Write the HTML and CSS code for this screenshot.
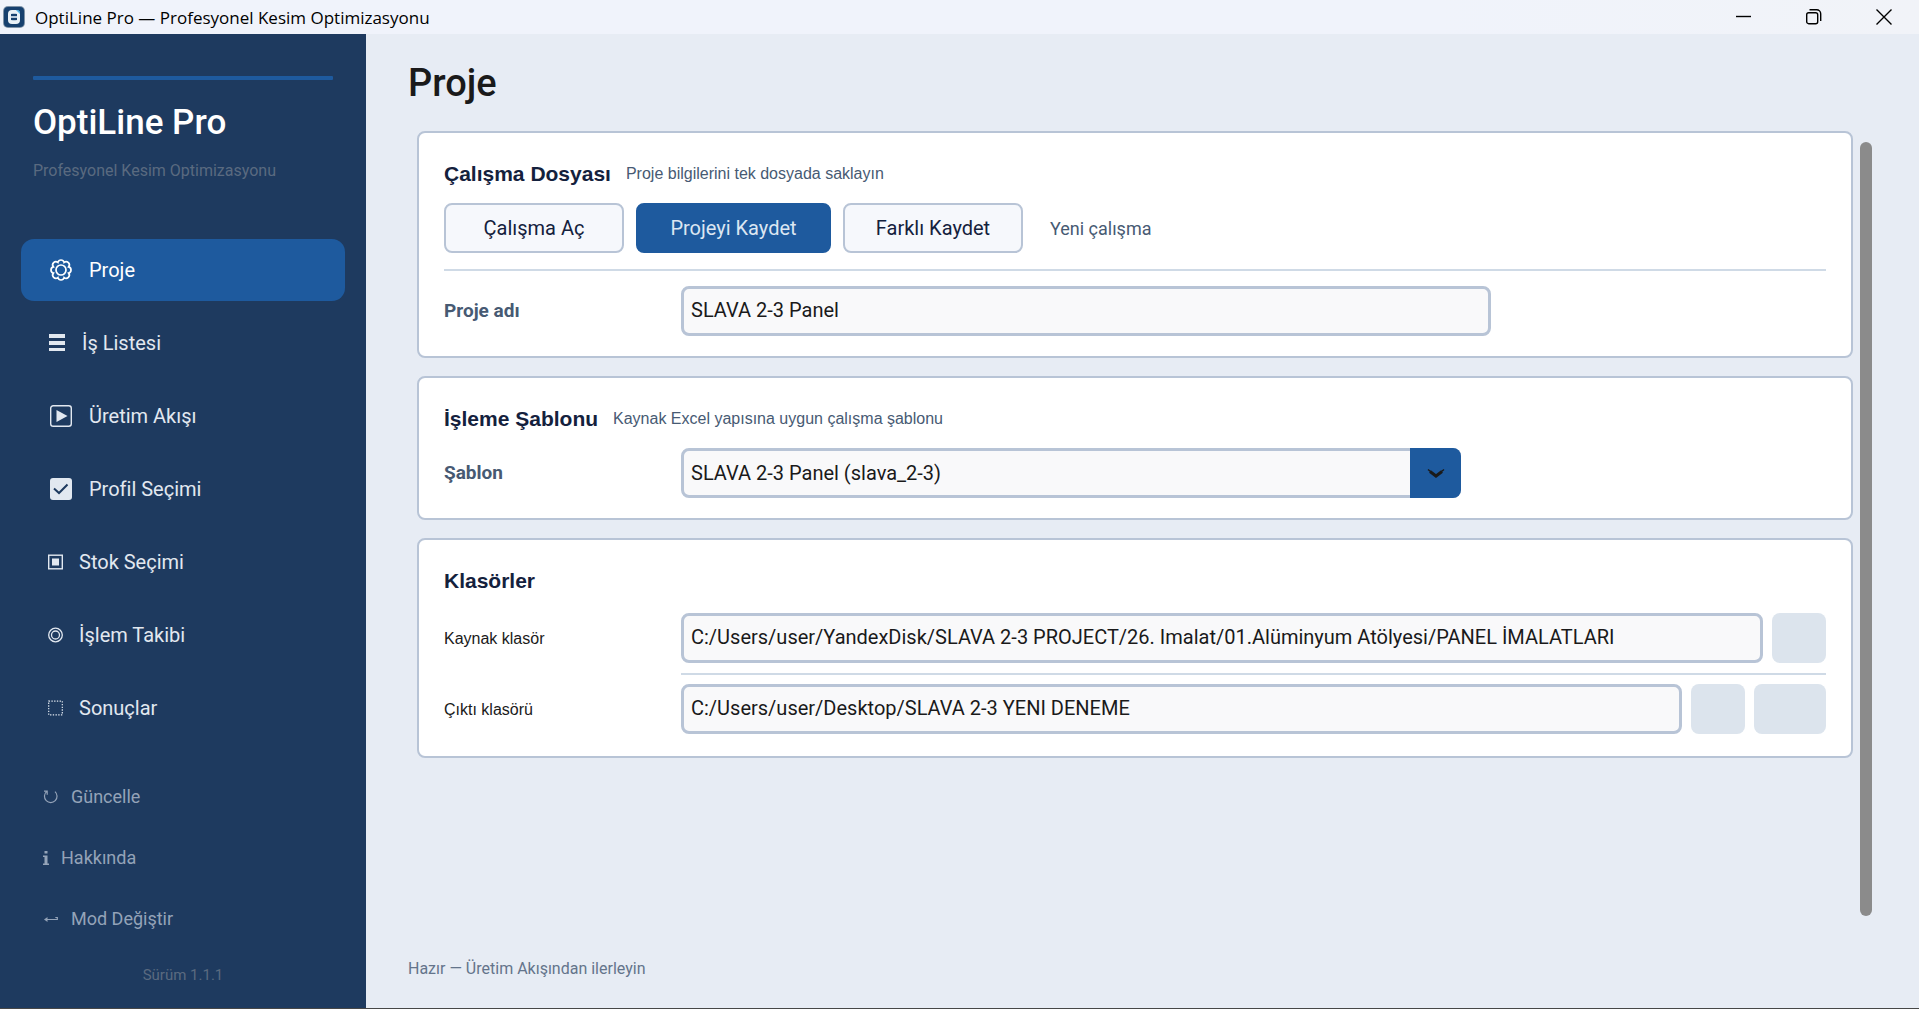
FILE: index.html
```html
<!DOCTYPE html>
<html lang="tr">
<head>
	<meta charset="utf-8">
	<title>OptiLine Pro — Profesyonel Kesim Optimizasyonu</title>
	<link rel="stylesheet" href="styles.css">
</head>
<body>
<header class="titlebar">
	<svg class="app-icon" width="22" height="22" viewBox="0 0 22 22">
		<rect width="22" height="22" rx="5" fill="#7f93a8"/>
		<rect x="1" y="1" width="20" height="20" rx="4" fill="#16406f"/>
		<rect x="5" y="4" width="12" height="14" rx="4" fill="#e9f1f8"/>
		<path d="M13 4h1a3 3 0 0 1 3 3v1z" fill="#4fb0e6"/>
		<rect x="8" y="7" width="6" height="8" rx="2" fill="#b9cadb"/>
		<path d="M8 9h6M8 13h6" stroke="#16406f" stroke-width="2"/>
	</svg>
	<span class="window-title">OptiLine Pro — Profesyonel Kesim Optimizasyonu</span>
	<div class="window-buttons">
		<button type="button" aria-label="Simge durumuna küçült"><svg width="16" height="16" viewBox="0 0 16 16"><path d="M0 7.5h15"/></svg></button>
		<button type="button" aria-label="Önceki boyut"><svg width="16" height="16" viewBox="0 0 16 16"><rect x="0.7" y="3.7" width="11" height="11" rx="2"/><path d="M3.5 0.7h7.2a4 4 0 0 1 4 4v7.3"/></svg></button>
		<button type="button" aria-label="Kapat"><svg width="16" height="16" viewBox="0 0 16 16"><path d="M0.5 0.5l15 15M15.5 0.5l-15 15"/></svg></button>
	</div>
</header>
<div class="layout">
	<aside class="sidebar">
		<div class="accent"></div>
		<div class="brand">OptiLine Pro</div>
		<div class="tagline">Profesyonel Kesim Optimizasyonu</div>
		<nav class="menu">
			<button type="button" class="on">
				<svg class="icon wide" viewBox="0 0 25 24">
					<path d="M9.9 4.4A3.2 3.2 0 0 1 16.1 4.4A3.2 3.2 0 0 1 20.6 8.9A3.2 3.2 0 0 1 20.6 15.1A3.2 3.2 0 0 1 16.1 19.6A3.2 3.2 0 0 1 9.9 19.6A3.2 3.2 0 0 1 5.4 15.1A3.2 3.2 0 0 1 5.4 8.9A3.2 3.2 0 0 1 9.9 4.4z" fill="none" stroke="currentColor" stroke-width="1.7"/>
					<circle cx="13" cy="12" r="5" fill="none" stroke="currentColor" stroke-width="1.7"/>
				</svg>
				<span>Proje</span>
			</button>
			<button type="button">
				<svg class="icon mid" viewBox="0 0 18 24"><path d="M1 3h16v4H1zM1 10h16v4H1zM1 17h16v3H1z" fill="currentColor"/></svg>
				<span>İş Listesi</span>
			</button>
			<button type="button">
				<svg class="icon wide" viewBox="0 0 25 24">
					<rect x="2.7" y="1.7" width="20.6" height="20.6" rx="2.5" fill="none" stroke="currentColor" stroke-width="1.4"/>
					<path d="M8.5 6l11 6-11 6z" fill="currentColor"/>
				</svg>
				<span>Üretim Akışı</span>
			</button>
			<button type="button">
				<svg class="icon wide" viewBox="0 0 25 24">
					<rect x="2" y="1" width="22" height="22" rx="3" fill="currentColor"/>
					<path d="M6 11.5l5 4.5 8.5-8.5" fill="none" stroke="#1e3a5f" stroke-width="2"/>
				</svg>
				<span>Profil Seçimi</span>
			</button>
			<button type="button">
				<svg class="icon small" viewBox="0 0 15 24"><rect x="0.7" y="5.2" width="13.6" height="13.6" fill="none" stroke="currentColor" stroke-width="1.4"/><rect x="4" y="8.5" width="7" height="7" fill="currentColor"/></svg>
				<span>Stok Seçimi</span>
			</button>
			<button type="button">
				<svg class="icon small" viewBox="0 0 15 24"><g fill="none" stroke="currentColor" stroke-width="1.3"><circle cx="7.5" cy="12" r="6.8"/><circle cx="7.5" cy="12" r="4"/></g></svg>
				<span>İşlem Takibi</span>
			</button>
			<button type="button">
				<svg class="icon small" viewBox="0 0 15 24"><rect x="0.7" y="5.2" width="13.6" height="13.6" fill="none" stroke="currentColor" stroke-width="1.2" stroke-dasharray="1.36 1.36"/></svg>
				<span>Sonuçlar</span>
			</button>
		</nav>
		<div class="extras">
			<button type="button">
				<svg class="icon loop" viewBox="0 0 16 16"><path d="M3.5 2.6a6.3 6.3 0 1 0 8.5 0M1 2.2h3.2v3.6" fill="none" stroke="currentColor" stroke-width="1.2"/></svg>
				<span>Güncelle</span>
			</button>
			<button type="button">
				<svg class="icon info" viewBox="0 0 6 16"><path d="M1.5 1h3v2.5h-3zM0 5.5h4.5v8H6V15H0v-1.5h1.5V7H0z" fill="currentColor"/></svg>
				<span>Hakkında</span>
			</button>
			<button type="button">
				<svg class="icon loop" viewBox="0 0 16 16"><path d="M2 8.5h12.3V6.5h-2" fill="none" stroke="currentColor" stroke-width="1.2"/><path d="M1 8.5l3.5-2.5v5z" fill="currentColor"/></svg>
				<span>Mod Değiştir</span>
			</button>
		</div>
		<div class="version">Sürüm 1.1.1</div>
	</aside>
	<main class="main">
		<h1>Proje</h1>
		<div class="scroll">
			<div class="cards">
				<section class="card">
					<div class="head"><h2>Çalışma Dosyası</h2><p>Proje bilgilerini tek dosyada saklayın</p></div>
					<div class="actions">
						<button type="button" class="btn">Çalışma Aç</button>
						<button type="button" class="btn primary">Projeyi Kaydet</button>
						<button type="button" class="btn">Farklı Kaydet</button>
						<span class="state">Yeni çalışma</span>
					</div>
					<hr>
					<div class="row">
						<label for="name">Proje adı</label>
						<input type="text" id="name" class="name" value="SLAVA 2-3 Panel">
					</div>
				</section>
				<section class="card">
					<div class="head"><h2>İşleme Şablonu</h2><p>Kaynak Excel yapısına uygun çalışma şablonu</p></div>
					<div class="row">
						<label for="template">Şablon</label>
						<div class="combo">
							<select id="template"><option>SLAVA 2-3 Panel (slava_2-3)</option></select>
							<span class="arrow"><svg width="18" height="10" viewBox="0 0 18 10"><path d="M1 1.5L3.5 3.5M17 1.5L14.5 3.5" stroke="#1a1a1a" stroke-width="1.5"/><path d="M3 3.5L9 8l6-4.5" fill="none" stroke="#1a1a1a" stroke-width="3"/></svg></span>
						</div>
					</div>
				</section>
				<section class="card">
					<div class="head"><h2>Klasörler</h2></div>
					<div class="folders">
						<div class="row">
							<label for="source" class="plain">Kaynak klasör</label>
							<input type="text" id="source" value="C:/Users/user/YandexDisk/SLAVA 2-3 PROJECT/26. Imalat/01.Alüminyum Atölyesi/PANEL İMALATLARI">
							<button type="button" class="pick" aria-label="Kaynak klasör seç"></button>
						</div>
						<hr>
						<div class="row">
							<label for="output" class="plain">Çıktı klasörü</label>
							<input type="text" id="output" value="C:/Users/user/Desktop/SLAVA 2-3 YENI DENEME">
							<button type="button" class="pick" aria-label="Çıktı klasörü seç"></button>
							<button type="button" class="pick open" aria-label="Çıktı klasörünü aç"></button>
						</div>
					</div>
				</section>
			</div>
			<div class="thumb"></div>
		</div>
		<div class="status">Hazır — Üretim Akışından ilerleyin</div>
	</main>
</div>
</body>
</html>
```
FILE: styles.css
```css
*{margin: 0;padding: 0;box-sizing: border-box;}
body{display: flex;flex-direction: column;min-height: 100vh;font-family: Roboto, sans-serif;color: #1a1a1a;background: #e7ecf4;border-bottom: 1px solid #474747;}
button{border: 0;background: none;font: inherit;color: inherit;cursor: pointer;}

.titlebar{display: flex;align-items: center;height: 34px;padding-left: 3px;background: linear-gradient(90deg, #f0f3fb 75%, #f1f3f8);}
.window-title{margin-left: 10px;font: 17px "Open Sans", sans-serif;color: #000;}
.window-buttons{display: flex;margin-left: auto;}
.window-buttons button{display: flex;align-items: center;justify-content: center;width: 70px;height: 34px;}
.window-buttons svg{fill: none;stroke: #000;stroke-width: 1.4;}

.layout{display: flex;flex: 1;}
.sidebar{display: flex;flex-direction: column;flex: 0 0 366px;padding: 42px 21px 23px;background: #1e3a5f;}
.accent{height: 4px;margin: 0 12px;border-radius: 1px;background: #1e5a9e;}
.brand{margin: 23px 12px 0;font-size: 35px;line-height: 40px;font-weight: 500;color: #fff;}
.tagline{margin: 18px 12px 0;font-size: 16px;line-height: 20px;color: #5a6a80;}
.menu{display: flex;flex-direction: column;gap: 11px;margin-top: 58px;}
.menu button{display: flex;align-items: center;gap: 16px;height: 62px;padding-left: 27px;border-radius: 13px;font-size: 20px;color: #e2e8f0;}
.menu .on{background: #1e5a9e;color: #fff;}
.icon{flex: none;height: 24px;}
.wide{width: 25px;}
.mid{width: 18px;}
.small{width: 15px;}
.extras{display: flex;flex-direction: column;margin-top: auto;}
.extras button{display: flex;align-items: center;gap: 12px;height: 61px;padding-left: 22px;font-size: 18px;color: #94a3b8;}
.extras .icon{height: 16px;}
.loop{width: 16px;}
.info{width: 6px;}
.version{margin-top: 16px;font-size: 15px;line-height: 20px;text-align: center;color: #5a6a80;}

.main{display: flex;flex-direction: column;flex: 1;min-width: 0;padding: 27px 47px 29px 42px;}
h1{font-size: 38px;line-height: 44px;font-weight: 500;}
.scroll{display: flex;flex: 1;gap: 7px;margin: 26px 0 32px;padding-left: 9px;}
.cards{display: flex;flex-direction: column;flex: 1;gap: 18px;min-width: 0;}
.thumb{width: 12px;margin: 11px 0;border-radius: 6px;background: #8b8b8b;}
.card{padding: 27px 25px 20px;border: 2px solid #b8c4d6;border-radius: 8px;background: #fff;}
.head{display: flex;align-items: center;gap: 15px;height: 28px;margin-bottom: 15px;font-family: "Liberation Sans", Arial, sans-serif;}
h2{font-size: 21px;font-weight: bold;color: #14213d;}
.head p{font-size: 16px;color: #475a73;}
.actions{display: flex;align-items: center;gap: 12px;}
.btn{width: 180px;height: 50px;border: 2px solid #b8c4d6;border-radius: 8px;background: #f6f8fc;font-size: 20px;color: #14213d;}
.primary{width: 195px;border-color: #1e5a9e;background: #1e5a9e;color: #dce6f2;}
.state{margin-left: 15px;font-size: 18px;color: #475a73;}
hr{height: 2px;border: 0;background: #cfdae6;}
.actions + hr{margin: 16px 0 15px;}
.row{display: flex;align-items: center;}
label{flex: 0 0 237px;padding-bottom: 2px;font-size: 19px;font-weight: bold;color: #475a73;}
.plain{padding: 2px 0 0;font: 16px "Liberation Sans", Arial, sans-serif;color: #1a1a1a;}
input,select{flex: 1;min-width: 0;height: 50px;padding: 0 7px;border: 3px solid #b8c4d6;border-radius: 8px;background: #f9f9fa;font: 20px Roboto, sans-serif;color: #1a1a1a;outline: none;}
input{padding-bottom: 2px;}
.name{max-width: 810px;}
.combo{position: relative;flex: 0 1 780px;}
.combo select{display: block;width: 100%;appearance: none;}
.arrow{position: absolute;top: 0;right: 0;display: flex;align-items: center;justify-content: center;width: 51px;height: 50px;border-radius: 0 8px 8px 0;background: #1e5a9e;pointer-events: none;}
.folders{padding: 3px 0 2px;}
.folders hr{margin: 10px 0 9px 237px;}
.pick{width: 54px;height: 50px;margin-left: 9px;border-radius: 8px;background: #dce4ed;}
.open{width: 72px;}
.status{font-size: 16px;line-height: 20px;color: #64748b;}
```
